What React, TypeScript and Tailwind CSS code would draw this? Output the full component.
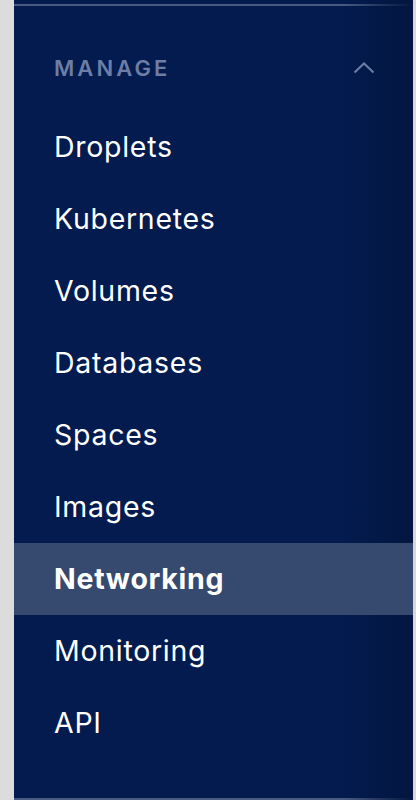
const items = [
  "Droplets",
  "Kubernetes",
  "Volumes",
  "Databases",
  "Spaces",
  "Images",
  "Networking",
  "Monitoring",
  "API",
];

export default function App() {
  const active = "Networking";

  return (
    <div className="flex h-[800px] w-[416px] overflow-hidden bg-[#dedede] font-['Inter',sans-serif]">
      {/* left page edge */}
      <div className="w-[14px] shrink-0 bg-[#dcdcdc]" />

      {/* sidebar */}
      <nav className="relative flex flex-1 flex-col bg-[#031b4e]">
        <div className="pointer-events-none absolute inset-y-0 right-0 w-[70px] bg-gradient-to-r from-transparent to-[#021640]" />
        <div className="h-[4px]" />
        <div className="h-[2px] bg-[#4a5b82]" />

        <div className="relative flex h-[105px] items-start justify-between pl-[40px] pr-[38px] pt-[50px]">
          <span className="text-[22px] font-semibold leading-[24px] tracking-[0.14em] text-[#6c7ea6]">
            MANAGE
          </span>
          <svg width="22" height="14" viewBox="0 0 22 14" className="mt-[5px]">
            <path d="M1.5 11.5 L11 2.5 L20.5 11.5" fill="none" stroke="#6c7ea6" strokeWidth="2" />
          </svg>
        </div>

        <ul className="relative flex flex-col">
          {items.map((item) => (
            <li
              key={item}
              className={`flex h-[72px] items-center pl-[40px] text-[28.5px] leading-none tracking-[0.025em] ${
                item === active ? "bg-[#36496f] font-bold text-white" : "font-normal text-white"
              }`}
            >
              {item}
            </li>
          ))}
        </ul>

        <div className="mt-auto h-[2px] bg-[#4a5b82]" />
      </nav>

      {/* right page edge */}
      <div className="w-[3px] shrink-0 bg-[#d8d8d8]" />
    </div>
  );
}
